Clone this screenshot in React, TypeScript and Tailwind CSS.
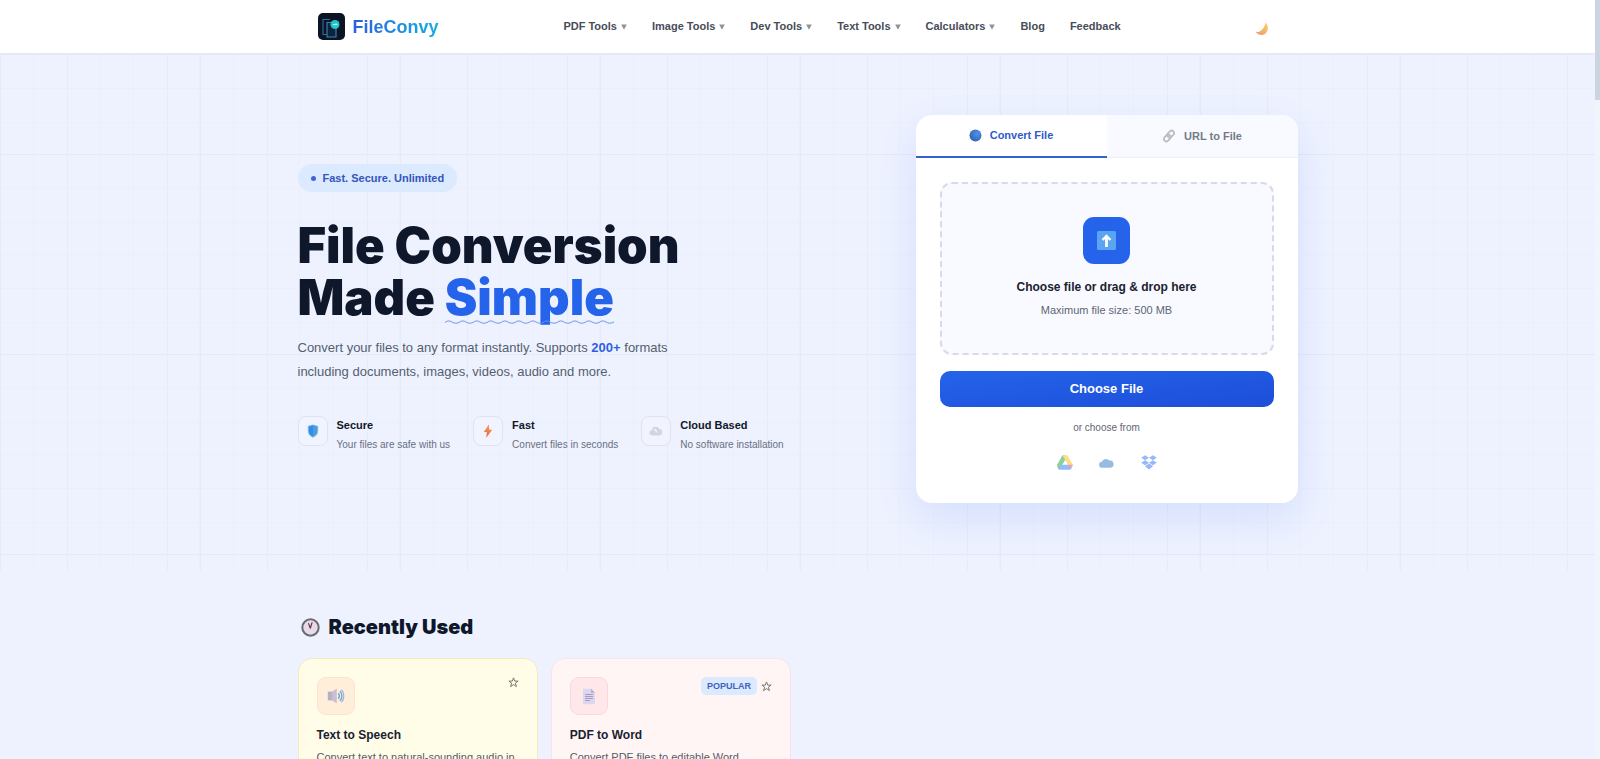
import React from "react";

const NAV_ITEMS = [
  { label: "PDF Tools", menu: true },
  { label: "Image Tools", menu: true },
  { label: "Dev Tools", menu: true },
  { label: "Text Tools", menu: true },
  { label: "Calculators", menu: true },
  { label: "Blog", menu: false },
  { label: "Feedback", menu: false },
];

const FEATURES = [
  { title: "Secure", text: "Your files are safe with us", icon: <ShieldIcon /> },
  { title: "Fast", text: "Convert files in seconds", icon: <BoltIcon /> },
  { title: "Cloud Based", text: "No software installation", icon: <CloudIcon /> },
];

function LogoIcon() {
  return (
    <svg width="27" height="27" viewBox="0 0 27 27" aria-hidden="true">
      <rect width="27" height="27" rx="5" fill="#0b1424" />
      <path d="M12 6.500H5V21.500H8.500" fill="none" stroke="#2c6f9f" strokeWidth="1.100" />
      <path d="M14 9.500H9V24h9V15" fill="#10223a" stroke="#3b86b8" strokeWidth="1.100" />
      <circle cx="17" cy="11.500" r="4.500" fill="#22c3c9" />
      <path d="M14.800 11.700h4.400M17.800 10.300l1.400 1.400" fill="none" stroke="#c9fbff" strokeWidth="1" />
    </svg>
  );
}

function MoonIcon() {
  return (
    <svg width="14" height="14" viewBox="0 0 14 14" aria-hidden="true">
      <defs>
        <linearGradient id="moon" x1="0" y1="1" x2="1" y2="0">
          <stop offset="0" stopColor="#ec966e" />
          <stop offset="1" stopColor="#fbd36a" />
        </linearGradient>
      </defs>
      <path d="M10.500.5c3 3 3.300 7.600.6 10.500C8.200 14 3.200 13.700.8 9.800c2.400.4 4.400-.3 5.900-1.900C8.500 6 10.300 3.800 10.500.5z" fill="url(#moon)" />
    </svg>
  );
}

function ShieldIcon() {
  return (
    <svg width="12" height="14" viewBox="0 0 12 14" aria-hidden="true">
      <path d="M6 .4 11.200 2v5c0 3.200-2.200 5.500-5.200 6.700C3 12.500.8 10.200.8 7V2z" fill="#7ec0ee" />
      <path d="M6 1.200 1.800 2.500V7c0 2.700 1.700 4.600 4.200 5.800z" fill="#2f8eea" />
      <path d="M6 1.200 10.200 2.500V7c0 2.700-1.700 4.600-4.200 5.800z" fill="#4f9bdc" />
    </svg>
  );
}

function BoltIcon() {
  return (
    <svg width="10" height="14" viewBox="0 0 10 14" aria-hidden="true">
      <defs>
        <linearGradient id="bolt" x1="0" y1="0" x2="0" y2="1">
          <stop offset="0" stopColor="#f5a25c" />
          <stop offset="1" stopColor="#e8613c" />
        </linearGradient>
      </defs>
      <path d="M5.900.2.800 7.900h3L3.300 13.800 9.200 5.700H6.200z" fill="url(#bolt)" />
    </svg>
  );
}

function CloudIcon() {
  return (
    <svg width="14" height="12" viewBox="0 0 14 12" aria-hidden="true">
      <path d="M3.200 10.500a2.600 2.600 0 0 1-.3-5.200A3.900 3.900 0 0 1 10.300 4a3.300 3.300 0 0 1 .4 6.500z" fill="#d3d5e2" />
      <path d="M5 4.500c1.800.2 2.600 1.500 2.500 3" fill="none" stroke="#f5f6fc" strokeWidth="1.200" />
    </svg>
  );
}

function GlobeIcon() {
  return (
    <svg width="13" height="13" viewBox="0 0 13 13" aria-hidden="true">
      <defs>
        <radialGradient id="globe" cx=".65" cy=".35" r=".7">
          <stop offset="0" stopColor="#4f93e6" />
          <stop offset="1" stopColor="#3263b8" />
        </radialGradient>
      </defs>
      <circle cx="6.500" cy="6.500" r="6" fill="url(#globe)" />
    </svg>
  );
}

function LinkIcon() {
  return (
    <svg width="14" height="14" viewBox="0 0 14 14" fill="none" stroke="#bcbbc3" strokeWidth="1.800" aria-hidden="true">
      <rect x="5" y="2.600" width="7.400" height="4.800" rx="2.400" transform="rotate(-45 8.700 5)" />
      <rect x="1.600" y="6.600" width="7.400" height="4.800" rx="2.400" transform="rotate(-45 5.300 9)" />
    </svg>
  );
}

function UploadIcon() {
  return (
    <svg width="19" height="19" viewBox="0 0 19 19" aria-hidden="true">
      <rect width="19" height="19" rx="1.500" fill="#5aa5f2" />
      <path d="M9.500 3.300 14.300 8.300l-1.600 1.500-1.800-1.700v7.800H8.100V8.100L6.300 9.800 4.700 8.300z" fill="#fff" />
    </svg>
  );
}

function DriveIcon() {
  return (
    <svg width="16" height="15" viewBox="0 0 16 15" aria-hidden="true">
      <path d="M5.400.3h2.700L10.600 5 8 5.200 3 13.800 1.500 14.500.2 11.500V9.500z" fill="#8bcfa2" />
      <path d="M5.400.3h5L15.800 9.700H11L8 4.800z" fill="#fddd86" />
      <path d="M4.800 9.700h11l-1.600 4.100-1.200.9H2.800l-1.600-.9z" fill="#94bbf6" />
      <path d="m11 9.700 4.800 0-1.600 4.100z" fill="#f4a79c" />
    </svg>
  );
}

function OneDriveIcon() {
  return (
    <svg width="15" height="10" viewBox="0 0 15 10" aria-hidden="true">
      <path d="M3.200 9.700a2.900 2.900 0 0 1-.3-5.900A4.300 4.300 0 0 1 10.300 2.500a3.600 3.600 0 0 1 1.200 7.200z" fill="#97bce2" />
    </svg>
  );
}

function DropboxIcon() {
  return (
    <svg width="16" height="15" viewBox="0 0 16 15" fill="#94b8f8" aria-hidden="true">
      <path d="M4.100.2 8 2.700 4.100 5.200.2 2.700zM11.900.2l3.900 2.500-3.900 2.500L8 2.700zM4.100 5.200 8 7.700l-3.900 2.500L.2 7.700zM11.900 5.200l3.900 2.500-3.900 2.500L8 7.700zM8 8.600l4.100 2.700L8 14.600l-4.100-3.300z" />
    </svg>
  );
}

function ClockIcon() {
  return (
    <svg width="19" height="19" viewBox="0 0 19 19" aria-hidden="true">
      <circle cx="9.500" cy="9.500" r="8.200" fill="#e6dbe6" stroke="#6b6a72" strokeWidth="2" />
      <path d="M9.300 10.200 11 4.800M9.300 10.200 7.600 5.600" stroke="#6b3a48" strokeWidth="1.200" strokeLinecap="round" />
    </svg>
  );
}

function SpeakerIcon() {
  return (
    <svg width="18" height="16" viewBox="0 0 18 16" aria-hidden="true">
      <path d="M.8 3.600h4.200v8.800H.8z" fill="#b4b0c6" />
      <path d="M5 3.600 9.800.8v14.400L5 12.400z" fill="#cdbdd2" />
      <path d="M11.200 5.300c1.300 1.500 1.300 3.900 0 5.400M13 3c2.500 2.800 2.500 7.200 0 10" fill="none" stroke="#6fa8dc" strokeWidth="1.500" />
      <path d="M14.600 1.600c3 3.600 3 9.200 0 12.800" fill="none" stroke="#a7b2d8" strokeWidth="1.200" />
    </svg>
  );
}

function DocumentIcon() {
  return (
    <svg width="14" height="17" viewBox="0 0 14 17" aria-hidden="true">
      <path d="M1 .8h8l4 4v11.400H1z" fill="#ddd6f0" />
      <path d="M9 .8v4h4z" fill="#b5aed0" />
      <path d="M3 6.500h8M3 8.500h8M3 10.500h8M3 12.500h5" stroke="#a79bbd" strokeWidth="1" />
    </svg>
  );
}

function StarIcon() {
  return (
    <svg width="11" height="11" viewBox="0 0 11 11" fill="none" stroke="#77776f" strokeWidth="1" aria-hidden="true">
      <path d="m5.500.9 1.200 3.200h3.400L7.400 6.200l1 3.400L5.500 7.600 2.600 9.600l1-3.400L.9 4.100h3.400z" />
    </svg>
  );
}

function Header() {
  return (
    <header className="border-b-2 border-[#e5e9f6] bg-white">
      <div className="mx-auto flex h-[53px] max-w-[1000px] items-center justify-between px-5">
        <a href="#" className="flex items-center gap-2">
          <LogoIcon />
          <span className="bg-gradient-to-r from-[#2b5fe0] to-[#18aee0] bg-clip-text text-[18px] leading-6 font-bold text-transparent">
            FileConvy
          </span>
        </a>
        <nav className="flex items-center gap-[25px]">
          {NAV_ITEMS.map((item) => (
            <a key={item.label} href="#" className="flex items-center gap-1 text-[11px] font-bold text-[#474d59]">
              {item.label}
              {item.menu && (
                <svg width="6" height="6" viewBox="0 0 6 6" aria-hidden="true">
                  <path d="M.2.400h5.600L3 5.800z" fill="#8f929a" />
                </svg>
              )}
            </a>
          ))}
        </nav>
        <button type="button" aria-label="Toggle theme" className="flex h-[27px] w-8 items-center justify-center pt-1">
          <MoonIcon />
        </button>
      </div>
    </header>
  );
}

function Squiggle() {
  return (
    <svg className="absolute bottom-0 left-0 h-1 w-full" aria-hidden="true">
      <defs>
        <pattern id="wave" width="14" height="4" patternUnits="userSpaceOnUse">
          <path d="M0 2.500C2 .5 5 .5 7 2s5 1.500 7 .5" fill="none" stroke="#6d92ee" strokeWidth="1" />
        </pattern>
      </defs>
      <rect width="100%" height="4" fill="url(#wave)" />
    </svg>
  );
}

function HeroText() {
  return (
    <div>
      <p className="inline-flex h-7 items-center gap-[7px] rounded-full bg-[#dbeafe] px-[13px] text-[11px] font-bold text-[#3455bd]">
        <span className="size-[5px] rounded-full bg-[#3d67d6]" />
        Fast. Secure. Unlimited
      </p>
      <h1 className="mt-7 font-['Inter','Liberation_Sans',sans-serif] text-[49px] leading-[52px] font-black text-[#0f172a]">
        File Conversion
        <br />
        Made{" "}
        <span className="relative inline-block text-[#2563eb]">
          Simple
          <Squiggle />
        </span>
      </h1>
      <p className="mt-3 max-w-[400px] text-[13px] leading-6 text-[#54606f]">
        Convert your files to any format instantly. Supports{" "}
        <strong className="font-bold text-[#2f5fe0]">200+</strong> formats including documents, images, videos, audio
        and more.
      </p>
      <ul className="mt-8 flex gap-[23px]">
        {FEATURES.map((feature) => (
          <li key={feature.title} className="flex items-start gap-[9px]">
            <span className="flex size-[30px] items-center justify-center rounded-lg border border-[#dfe2f0] bg-[#f1f4ff]">
              {feature.icon}
            </span>
            <div>
              <h3 className="text-[11px] leading-[19px] font-bold text-[#111827]">{feature.title}</h3>
              <p className="text-[10px] leading-[19px] text-[#68707f]">{feature.text}</p>
            </div>
          </li>
        ))}
      </ul>
    </div>
  );
}

function ConvertCard() {
  return (
    <div className="w-[382px] overflow-hidden rounded-2xl bg-white shadow-[0_16px_40px_rgba(37,99,235,0.12)]">
      <div className="grid grid-cols-2 text-[11px] font-bold" role="tablist">
        <button
          type="button"
          role="tab"
          aria-selected="true"
          className="flex h-[43px] items-center justify-center gap-2 border-b-2 border-[#3561cf] text-[#2f5bcb]"
        >
          <GlobeIcon />
          Convert File
        </button>
        <button
          type="button"
          role="tab"
          aria-selected="false"
          className="flex h-[43px] items-center justify-center gap-2 border-b border-[#eceff5] bg-[#f8faff] text-[#747a86]"
        >
          <LinkIcon />
          URL to File
        </button>
      </div>
      <div className="px-6 pt-6 pb-[27px]">
        <div className="flex h-[173px] flex-col items-center rounded-xl border-2 border-dashed border-[#d6daea] bg-[#f8faff] pt-[33px]">
          <span className="flex size-[47px] items-center justify-center rounded-[11px] bg-[#2563eb]">
            <UploadIcon />
          </span>
          <p className="mt-[13px] text-[12px] leading-5 font-bold text-[#1a2130]">Choose file or drag &amp; drop here</p>
          <p className="mt-1 text-[11px] leading-[18px] text-[#5d6675]">Maximum file size: 500 MB</p>
        </div>
        <button
          type="button"
          className="mt-4 h-9 w-full rounded-[10px] bg-gradient-to-br from-[#2563eb] to-[#1d4ed8] text-[13px] font-bold text-white"
        >
          Choose File
        </button>
        <p className="mt-3 text-center text-[10px] leading-[18px] text-[#5f6673]">or choose from</p>
        <div className="mt-3 flex justify-center gap-2">
          <button type="button" aria-label="Google Drive" className="flex h-[27px] w-[34px] items-center justify-center">
            <DriveIcon />
          </button>
          <button type="button" aria-label="OneDrive" className="flex h-[27px] w-[34px] items-center justify-center">
            <OneDriveIcon />
          </button>
          <button type="button" aria-label="Dropbox" className="flex h-[27px] w-[34px] items-center justify-center">
            <DropboxIcon />
          </button>
        </div>
      </div>
    </div>
  );
}

function Hero() {
  return (
    <section className="bg-[repeating-linear-gradient(90deg,#e7ebf8_0px,#e7ebf8_1px,transparent_1px,transparent_200px),repeating-linear-gradient(180deg,transparent_0px,transparent_99px,#e5e9f5_99px,#e5e9f5_100px,transparent_100px,transparent_200px),repeating-linear-gradient(90deg,transparent_0px,transparent_33px,#ebeffc_33px,#ebeffc_34px,transparent_34px,transparent_67px,#e8ecf9_67px,#e8ecf9_68px,transparent_68px,transparent_99px,#ebeffc_99px,#ebeffc_100px),repeating-linear-gradient(180deg,transparent_0px,transparent_33px,#ebeffc_33px,#ebeffc_34px,transparent_34px,transparent_67px,#ebeffc_67px,#ebeffc_68px,transparent_68px,transparent_99px,#ebeffc_99px,#ebeffc_100px)] pt-[60px] pb-[68px]">
      <div className="mx-auto flex max-w-[1000px] items-center justify-between">
        <HeroText />
        <ConvertCard />
      </div>
    </section>
  );
}

function RecentlyUsed() {
  return (
    <section className="mx-auto max-w-[1000px] pt-11">
      <h2 className="flex items-center gap-[9px] pl-[3px] font-['Inter','Liberation_Sans',sans-serif] text-[20px] leading-6 font-black text-[#0f172a]">
        <ClockIcon />
        Recently Used
      </h2>
      <div className="mt-[19px] grid grid-cols-4 gap-[13px]">
        <article className="rounded-[14px] border border-[#f5ebbd] bg-[#fffde8] p-[18px]">
          <div className="flex items-start justify-between">
            <span className="flex size-[38px] items-center justify-center rounded-[9px] border border-[#fbe4c8] bg-[#ffeeda]">
              <SpeakerIcon />
            </span>
            <button type="button" aria-label="Add Text to Speech to favourites">
              <StarIcon />
            </button>
          </div>
          <h3 className="mt-[10px] text-[12px] leading-5 font-bold text-[#1a2130]">Text to Speech</h3>
          <p className="mt-1 text-[11px] leading-[17px] text-[#555c69]">
            Convert text to natural-sounding audio in multiple languages
          </p>
        </article>
        <article className="rounded-[14px] border border-[#fae3e6] bg-[#fff5f5] p-[18px]">
          <div className="flex items-start justify-between">
            <span className="flex size-[38px] items-center justify-center rounded-[9px] border border-[#fad9de] bg-[#ffe7ea]">
              <DocumentIcon />
            </span>
            <div className="flex items-center gap-1">
              <span className="rounded-[5px] bg-[#dbeafe] px-[6px] text-[9px] leading-[18px] font-bold text-[#3f63bb]">
                POPULAR
              </span>
              <button type="button" aria-label="Add PDF to Word to favourites">
                <StarIcon />
              </button>
            </div>
          </div>
          <h3 className="mt-[10px] text-[12px] leading-5 font-bold text-[#1a2130]">PDF to Word</h3>
          <p className="mt-1 text-[11px] leading-[17px] text-[#555c69]">Convert PDF files to editable Word documents</p>
        </article>
      </div>
    </section>
  );
}

export default function App() {
  return (
    <div className="flex h-screen overflow-hidden bg-[#eef2ff] font-['Liberation_Sans',Arial,sans-serif]">
      <main className="min-w-0 flex-1">
        <Header />
        <Hero />
        <RecentlyUsed />
      </main>
      <div className="w-[5px] bg-[#f1f5f9]" aria-hidden="true">
        <div className="h-[100px] bg-[#cbd5e1]" />
      </div>
    </div>
  );
}
